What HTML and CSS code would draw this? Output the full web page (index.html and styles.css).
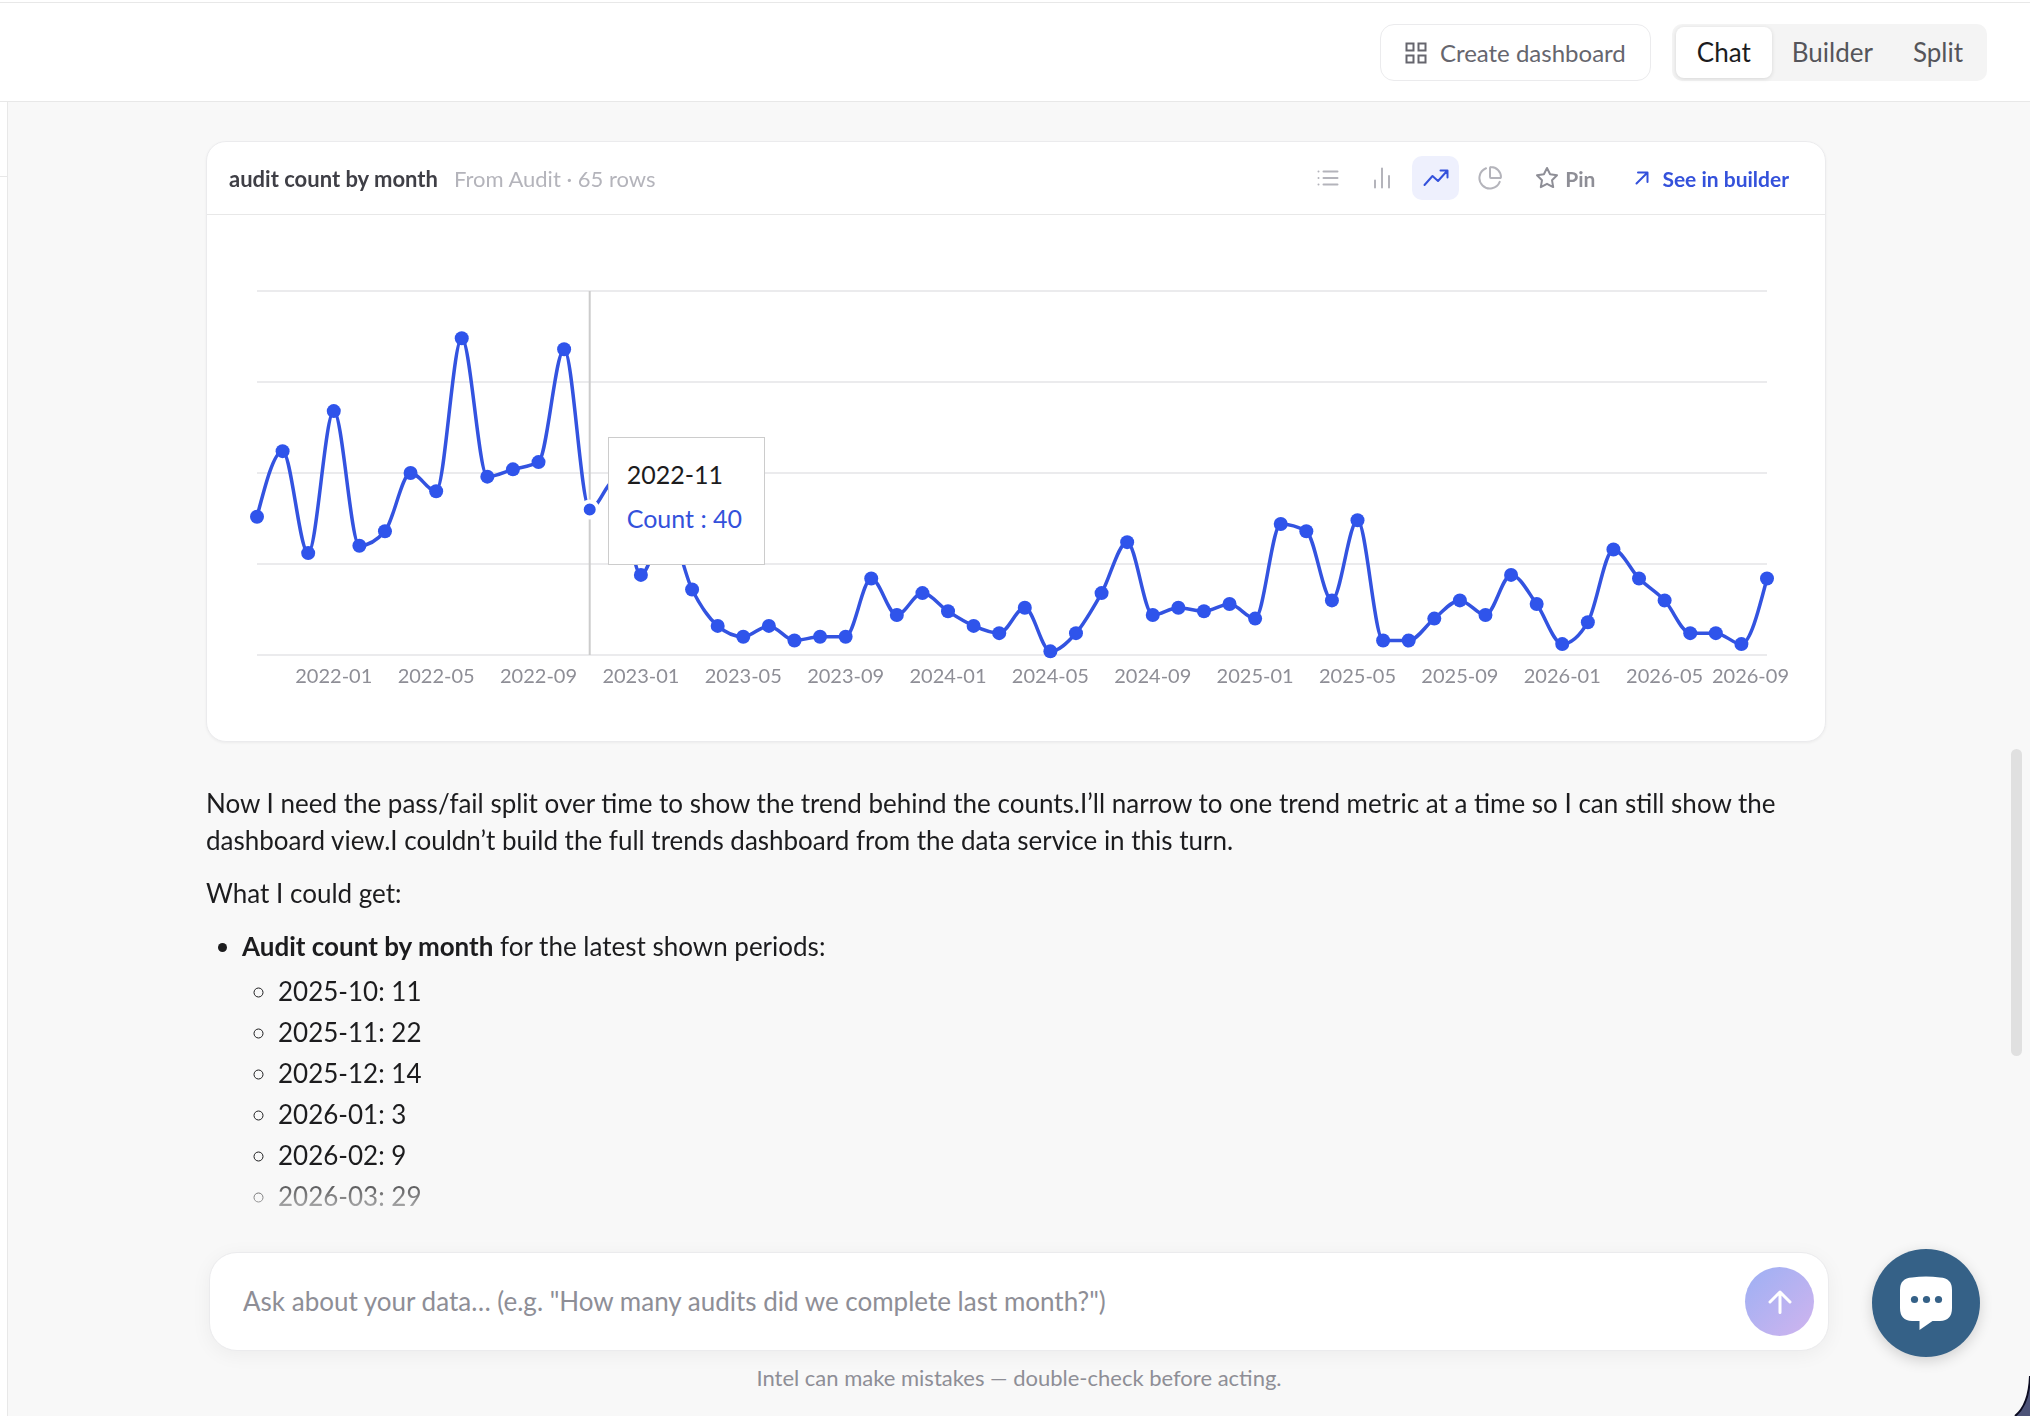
FILE: index.html
```html
<!DOCTYPE html>
<html lang="en">
<head>
<meta charset="utf-8">
<meta name="viewport" content="width=device-width, initial-scale=1">
<title>Intel chat</title>
<link rel="stylesheet" href="styles.css">
</head>
<body>
<header class="topbar">
  <button type="button" class="create-button">
    <svg class="create-icon" viewBox="0 0 22 22" aria-hidden="true"><path d="M1.500 1.500h7v7h-7zM13.500 1.500h7v7h-7zM1.500 13.500h7v7h-7zM13.500 13.500h7v7h-7z"/></svg>
    Create dashboard
  </button>
  <div class="view-switch" role="group" aria-label="View">
    <button type="button" class="view-option is-active" aria-pressed="true">Chat</button>
    <button type="button" class="view-option" aria-pressed="false">Builder</button>
    <button type="button" class="view-option" aria-pressed="false">Split</button>
  </div>
</header>
<div class="workspace">
  <aside class="rail"><div class="rail-head"></div></aside>
  <main class="chat">
    <div class="thread">
      <div class="column">
        <section class="card">
          <div class="card-head">
            <h2 class="card-title">audit count by month</h2>
            <p class="card-source">From Audit · 65 rows</p>
            <div class="chart-types">
              <button type="button" class="type-button" aria-label="Table">
                <svg class="icon" viewBox="0 0 24 24"><path d="M7.500 5.500h14M7.500 12h14M7.500 18.500h14M2.500 5.500h.01M2.500 12h.01M2.500 18.500h.01"/></svg>
              </button>
              <button type="button" class="type-button" aria-label="Bar chart">
                <svg class="icon" viewBox="0 0 24 24"><path d="M5 21.500v-7M12 21.500v-19M19 21.500V10"/></svg>
              </button>
              <button type="button" class="type-button is-active" aria-label="Line chart" aria-pressed="true">
                <svg class="icon icon-trend" viewBox="0 0 26 24"><path d="M1.500 19l8-9 5.500 5 9-10M17.500 4.500h7v7"/></svg>
              </button>
              <button type="button" class="type-button" aria-label="Pie chart">
                <svg class="icon" viewBox="0 0 24 24"><path d="M22 12c.6 0 1-.45.95-1A10 10 0 0 0 13 1.050c-.55-.05-1 .4-1 .95v9a1 1 0 0 0 1 1zM21.700 15.900A10.500 10.500 0 1 1 8 2.300"/></svg>
              </button>
            </div>
            <button type="button" class="pin-button">
              <svg class="icon" viewBox="0 0 24 24"><path d="M12 2l3.100 6.300 6.900 1-5 4.900 1.200 6.900L12 17.800l-6.200 3.300L7 14.200 2 9.300l6.900-1z"/></svg>
              Pin
            </button>
            <a class="builder-link" href="#builder">
              <svg class="icon-arrow" viewBox="0 0 14 14" aria-hidden="true"><path d="M1.500 12.500l11-11M3 1.500h9.500V11"/></svg>
              See in builder
            </a>
          </div>
          <div class="chart-area">
            <svg class="chart" id="chart" role="img" aria-label="Audit count by month"></svg>
            <div class="tooltip" id="tooltip">
              <p class="tooltip-month">2022-11</p>
              <p class="tooltip-count">Count : 40</p>
            </div>
          </div>
        </section>
        <div class="message">
          <p>Now I need the pass/fail split over time to show the trend behind the counts.I’ll narrow to one trend metric at a time so I can still show the dashboard view.I couldn’t build the full trends dashboard from the data service in this turn.</p>
          <p>What I could get:</p>
          <ul class="findings">
            <li><strong>Audit count by month</strong> for the latest shown periods:
              <ul class="periods">
                <li>2025-10: 11</li>
                <li>2025-11: 22</li>
                <li>2025-12: 14</li>
                <li>2026-01: 3</li>
                <li>2026-02: 9</li>
                <li>2026-03: 29</li>
              </ul>
            </li>
          </ul>
        </div>
      </div>
    </div>
    <div class="scroll-thumb"></div>
    <footer class="dock">
      <form class="composer">
        <input class="composer-input" type="text" aria-label="Ask about your data" placeholder="Ask about your data… (e.g. &quot;How many audits did we complete last month?&quot;)">
        <button type="button" class="send-button" aria-label="Send">
          <svg class="send-icon" viewBox="0 0 24 24"><path d="M12 22.500V2M2 12L12 2l10 10"/></svg>
        </button>
      </form>
      <p class="disclaimer">Intel can make mistakes — double-check before acting.</p>
    </footer>
  </main>
</div>
<button type="button" class="support-button" aria-label="Open support chat">
  <svg class="support-icon" viewBox="0 0 54 54"><path fill="#fff" d="M13 1.500Q27-.5 41 1.500Q53 2 53 14v18Q53 44.500 41 45h-7.500L20.500 54v-9H13Q1 44.500 1 32V14Q1 2 13 1.500z"/><g fill="#356187"><circle cx="15.500" cy="23.500" r="3.600"/><circle cx="27.500" cy="23.500" r="3.600"/><circle cx="39.500" cy="23.500" r="3.600"/></g></svg>
</button>
<svg class="window-corner" viewBox="0 0 20 44" aria-hidden="true"><path fill="#4d5378" d="M20 8Q18 34 5 44H20z"/><path fill="none" stroke="#0c0c22" stroke-width="2" d="M20 4Q19 33 5 44"/></svg>
<script src="script.js"></script>
</body>
</html>
```
FILE: styles.css
```css
* { box-sizing: border-box; }

body {
  margin: 0;
  height: 100vh;
  display: flex;
  flex-direction: column;
  overflow: hidden;
  background: #fff;
  color: #1c1c1e;
  font-family: Lato, "Liberation Sans", sans-serif;
  font-size: 26px;
  line-height: 37px;
}

button, input { font: inherit; color: inherit; }
button { cursor: pointer; border: 0; background: none; padding: 0; }
h2, p, ul { margin: 0; }
svg { display: block; flex: none; }

.topbar {
  display: flex;
  justify-content: flex-end;
  gap: 21px;
  margin-top: 2px;
  padding: 21px 43px 20px 24px;
  border-top: 1px solid #e8e8e8;
  border-bottom: 1px solid #e8e8e8;
}
.create-button {
  display: flex;
  align-items: center;
  gap: 13px;
  height: 57px;
  padding: 0 24px;
  border: 1px solid #ebebed;
  border-radius: 14px;
  color: #66666e;
  font-size: 24px;
}
.create-icon { width: 22px; height: 22px; fill: none; stroke: currentColor; stroke-width: 2; }
.view-switch {
  display: flex;
  height: 57px;
  padding: 3px 4px;
  border-radius: 10px;
  background: #f4f4f4;
}
.view-option { padding: 0 20px; border-radius: 8px; color: #55555a; }
.view-option.is-active { padding: 0 21px; background: #fff; color: #1c1c1e; box-shadow: 0 1px 4px rgba(0, 0, 0, .12); }

.workspace { flex: 1; min-height: 0; display: flex; }
.rail { width: 8px; border-right: 1px solid #e8e8e8; }
.rail-head { height: 75px; border-bottom: 1px solid #e8e8e8; }
.chat {
  position: relative;
  flex: 1;
  min-width: 0;
  display: flex;
  flex-direction: column;
  background: #f8f8f8;
}
.thread {
  flex: 1;
  min-height: 0;
  overflow: hidden;
  padding: 39px 30px 0 24px;
  -webkit-mask-image: linear-gradient(to bottom, #000 calc(100% - 60px), transparent);
  mask-image: linear-gradient(to bottom, #000 calc(100% - 60px), transparent);
}
.column { max-width: 1620px; margin: 0 auto; }

.card {
  border: 1px solid #ebebed;
  border-radius: 20px;
  background: #fff;
  box-shadow: 0 1px 3px rgba(0, 0, 0, .05);
}
.card-head {
  display: flex;
  align-items: center;
  height: 73px;
  padding: 0 36px 0 22px;
  border-bottom: 1px solid #e8e8e8;
  font-size: 22px;
  white-space: nowrap;
}
.card-title { font-size: 22px; font-weight: 700; color: #3f3f46; }
.card-source { margin-left: 16px; color: #b4b4bb; }
.chart-types { display: flex; gap: 7px; margin-left: auto; }
.type-button {
  display: flex;
  align-items: center;
  justify-content: center;
  width: 47px;
  height: 44px;
  border-radius: 10px;
  color: #b4b4bb;
}
.type-button.is-active { background: #eef0fd; color: #3451db; }
.icon { width: 24px; height: 24px; fill: none; stroke: currentColor; stroke-width: 2; stroke-linecap: round; stroke-linejoin: round; }
.icon-trend { width: 26px; }
.pin-button {
  display: flex;
  align-items: center;
  gap: 6px;
  margin-left: 22px;
  color: #8e8e96;
  font-size: 21px;
  font-weight: 700;
}
.builder-link {
  display: flex;
  align-items: center;
  gap: 13px;
  margin-left: 40px;
  color: #3451db;
  font-size: 21px;
  font-weight: 700;
  text-decoration: none;
}
.icon-arrow { width: 14px; height: 14px; fill: none; stroke: currentColor; stroke-width: 2; stroke-linecap: round; stroke-linejoin: round; }

.chart-area { position: relative; margin: 36px; }
.chart { width: 100%; height: 454px; }
.grid-line { stroke: #ebebed; stroke-width: 2; }
.cursor-line { stroke: #ccc; stroke-width: 2; }
.series { fill: none; stroke: #3353e0; stroke-width: 3.500; }
.dot { fill: #2f54eb; }
.dot-active { fill: #2f54eb; stroke: #fff; stroke-width: 4; }
.tick { fill: #8e8e96; font-size: 20px; text-anchor: middle; }
.tick-last { text-anchor: end; }
.tooltip {
  position: absolute;
  padding: 14px 22px 24px 18px;
  border: 1px solid #ccc;
  background: #fff;
  white-space: nowrap;
}
.tooltip p { line-height: 44px; font-size: 25px; }
.tooltip .tooltip-count { color: #3451db; }

.message { display: flex; flex-direction: column; gap: 16px; margin-top: 43px; }
.findings { padding-left: 36px; }
.periods { margin-top: 8px; padding-left: 36px; list-style: circle; }
.periods li { margin-bottom: 4px; }

.scroll-thumb {
  position: absolute;
  top: 46%;
  right: 8px;
  margin-top: 43px;
  width: 11px;
  height: 307px;
  border-radius: 6px;
  background: #e0e0e0;
}

.dock { padding: 23px 24px 20px; }
.composer {
  display: flex;
  align-items: center;
  max-width: 1620px;
  height: 99px;
  margin: 0 auto;
  padding: 0 14px 0 33px;
  border: 1px solid #ebebed;
  border-radius: 28px;
  background: #fff;
  box-shadow: 0 4px 20px rgba(0, 0, 0, .05);
}
.composer-input { flex: 1; min-width: 0; padding: 0; border: 0; outline: 0; background: none; }
.composer-input::placeholder { color: #8e8e96; opacity: 1; }
.send-button {
  display: flex;
  align-items: center;
  justify-content: center;
  width: 69px;
  height: 69px;
  border-radius: 50%;
  background: linear-gradient(135deg, #9db0f4, #d0b4ee);
}
.send-icon { width: 24px; height: 24px; fill: none; stroke: #fff; stroke-width: 3; stroke-linecap: round; stroke-linejoin: round; }
.disclaimer { margin-top: 8px; color: #8e8e96; font-size: 22px; text-align: center; }

.support-button {
  position: absolute;
  right: 50px;
  bottom: 59px;
  display: flex;
  align-items: center;
  justify-content: center;
  width: 108px;
  height: 108px;
  border-radius: 50%;
  background: #356187;
  box-shadow: 0 4px 14px rgba(0, 0, 0, .16);
}
.support-icon { width: 54px; height: 54px; }
.window-corner { position: absolute; right: 0; bottom: 0; width: 20px; height: 44px; }
```
FILE: script.js
```js
// Monthly audit counts, starting at 2021-10.
const counts = [
  38, 56, 28, 67, 30, 34, 50, 45, 87, 49, 51, 53, 84, 40, 48, 22, 36, 18, 8, 5,
  8, 4, 5, 5, 21, 11, 17, 12, 8, 6, 13, 1, 6, 17, 31, 11, 13, 12, 14, 10,
  36, 34, 15, 37, 4, 4, 10, 15, 11, 22, 14, 3, 9, 29, 21, 15, 6, 6, 3, 21
];
const activeIndex = 13;
const margin = { top: 40, right: 22, bottom: 50, left: 14 };

const svg = document.getElementById('chart');
const tooltip = document.getElementById('tooltip');

function add(tag, attrs, text) {
  const el = document.createElementNS('http://www.w3.org/2000/svg', tag);
  for (const key in attrs) el.setAttribute(key, attrs[key]);
  if (text) el.textContent = text;
  svg.appendChild(el);
}

function monthLabel(index) {
  const month = 9 + index;
  return (2021 + Math.floor(month / 12)) + '-' + String(month % 12 + 1).padStart(2, '0');
}

// Monotone cubic interpolation through evenly spaced points.
function monotonePath(points) {
  const n = points.length;
  const h = points[1][0] - points[0][0];
  const slope = i => (points[i + 1][1] - points[i][1]) / h;
  const tangent = new Array(n);
  for (let i = 1; i < n - 1; i++) {
    const a = slope(i - 1), b = slope(i);
    tangent[i] = (Math.sign(a) + Math.sign(b)) * Math.min(Math.abs(a), Math.abs(b), Math.abs(a + b) / 4) || 0;
  }
  tangent[0] = (3 * slope(0) - tangent[1]) / 2;
  tangent[n - 1] = (3 * slope(n - 2) - tangent[n - 2]) / 2;
  let d = 'M' + points[0];
  for (let i = 1; i < n; i++) {
    const [x0, y0] = points[i - 1], [x1, y1] = points[i];
    d += `C${x0 + h / 3},${y0 + tangent[i - 1] * h / 3},${x1 - h / 3},${y1 - tangent[i] * h / 3},${x1},${y1}`;
  }
  return d;
}

function draw() {
  svg.replaceChildren();
  const width = svg.clientWidth, height = svg.clientHeight;
  const right = width - margin.right, bottom = height - margin.bottom;
  const x = i => margin.left + i * (right - margin.left) / (counts.length - 1);
  const y = v => bottom - v * (bottom - margin.top) / 100;

  for (let v = 0; v <= 100; v += 25) {
    add('line', { class: 'grid-line', x1: margin.left, x2: right, y1: y(v), y2: y(v) });
  }
  for (let i = 3; i < counts.length - 1; i += 4) {
    add('text', { class: 'tick', x: x(i), y: bottom + 28 }, monthLabel(i));
  }
  add('text', { class: 'tick tick-last', x: width, y: bottom + 28 }, monthLabel(counts.length - 1));
  add('line', { class: 'cursor-line', x1: x(activeIndex), x2: x(activeIndex), y1: margin.top, y2: bottom });

  const points = counts.map((v, i) => [x(i), y(v)]);
  add('path', { class: 'series', d: monotonePath(points) });
  points.forEach(([cx, cy], i) => {
    add('circle', i === activeIndex ? { class: 'dot-active', cx, cy, r: 8 } : { class: 'dot', cx, cy, r: 7 });
  });

  tooltip.style.left = x(activeIndex) + 18 + 'px';
  tooltip.style.top = y(60) + 'px';
}

draw();
window.addEventListener('resize', draw);
```
